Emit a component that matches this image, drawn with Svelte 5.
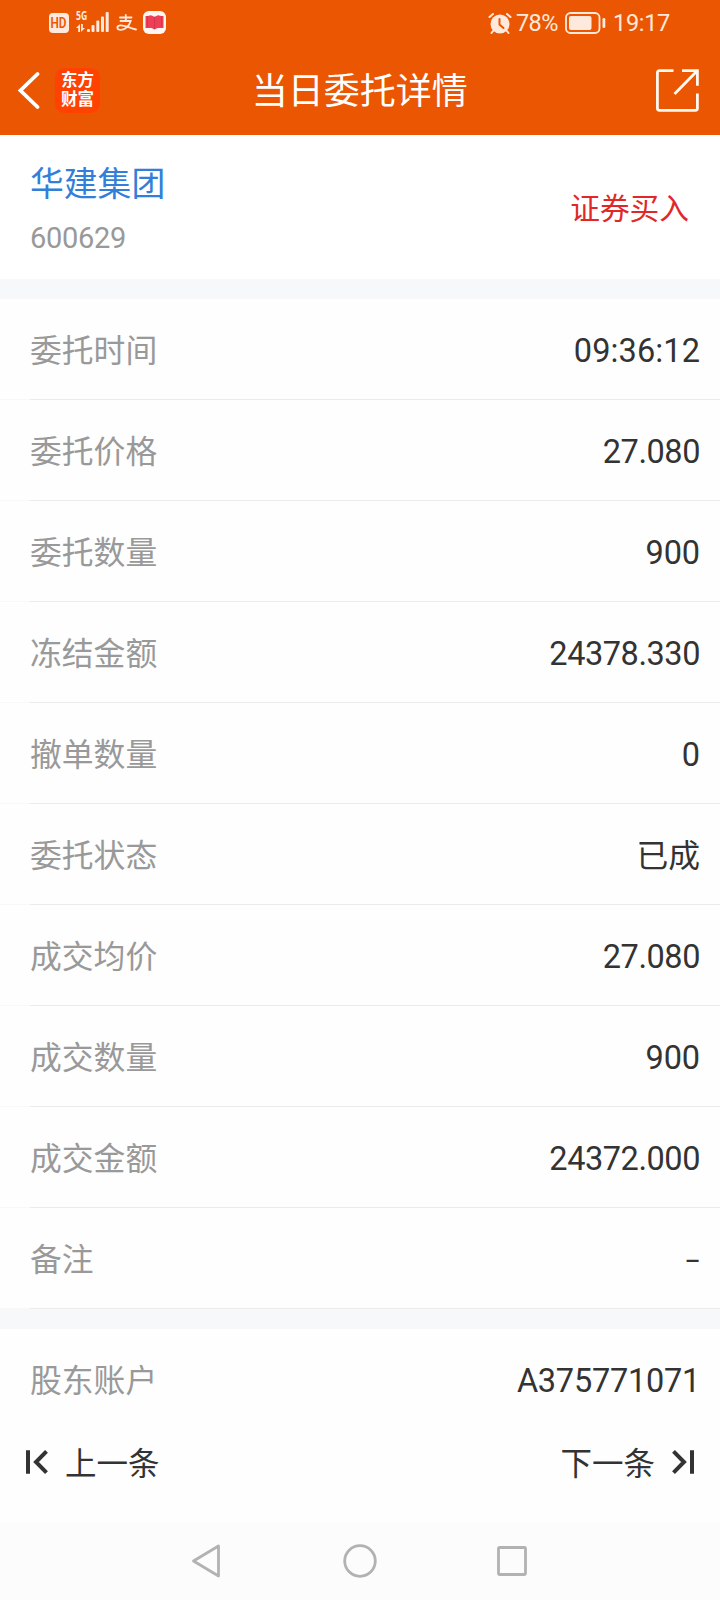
<script>
  const rows = [
    ['委托时间', '09:36:12'],
    ['委托价格', '27.080'],
    ['委托数量', '900'],
    ['冻结金额', '24378.330'],
    ['撤单数量', '0'],
    ['委托状态', '已成'],
    ['成交均价', '27.080'],
    ['成交数量', '900'],
    ['成交金额', '24372.000'],
    ['备注', '–']
  ];
</script>

<div class="screen">
  <header>
    <div class="status">
      <div class="group left">
        <span class="hd"><b>HD</b></span>
        <div class="net">
          <span class="gen">5G</span>
          <svg width="34" height="22" viewBox="0 0 34 22" fill="#ffe9dc">
            <path d="M4 13v8H2.200v-4H0zM5 21v-8h1.800v4H9z" />
            <rect x="11" y="18" width="3" height="3" rx="1" />
            <rect x="15.500" y="14" width="3" height="7" rx="1" />
            <rect x="20.300" y="9.500" width="3" height="11.500" rx="1" />
            <rect x="25" y="5.500" width="3" height="15.500" rx="1" />
            <rect x="29.700" y="1" width="3" height="20" rx="1" />
          </svg>
        </div>
        <svg class="pay" width="22" height="18" viewBox="0 0 22 18" fill="none" stroke="#ffe9dc" stroke-width="1.800" stroke-linecap="round">
          <path d="M4 3.500h11.500M9.800 1v5.500M4.500 7h10.200C13.500 11 10 15.500 5 15.800c-4.500.2-4.800-4-.8-4.500 4-.4 9 2.600 15.800 4.200" />
        </svg>
        <svg class="book" width="23" height="23" viewBox="0 0 23 23">
          <rect width="23" height="23" rx="6" fill="#fff6f2" />
          <path d="M2.500 5h2l3.500-.8 3.500 1.600L15 4.200l3.500.8h2v12h-6l-3 1.500-3-1.500h-6z" fill="#ed4057" />
          <path d="M4.500 5v11M18.500 5v11M11.500 6v12" stroke="#c92f47" stroke-width=".7" fill="none" />
        </svg>
      </div>
      <div class="group right">
        <svg width="24" height="23" viewBox="0 0 24 23">
          <path d="M1.500 5 5 2M22.500 5 19 2M5.500 18.500l-2 2.500M18.500 18.500l2 2.500" stroke="#ffe9dc" stroke-width="2" stroke-linecap="round" />
          <circle cx="12" cy="12" r="9.500" fill="#ffe9dc" />
          <path d="M11.500 7v5.500l4 3.500" fill="none" stroke="#eb5603" stroke-width="2" stroke-linecap="round" />
        </svg>
        <span class="pct">78%</span>
        <svg class="battery" width="41" height="22" viewBox="0 0 41 22" fill="#ffe9dc">
          <rect x="1" y="1" width="33.500" height="20" rx="4.500" fill="none" stroke="#ffe9dc" stroke-width="1.800" />
          <rect x="4" y="4" width="22.500" height="14" rx="2" />
          <rect x="37.500" y="6" width="2.800" height="10" rx="1.300" />
        </svg>
        <span class="clock">19:17</span>
      </div>
    </div>
    <div class="titlebar">
      <div class="side">
        <svg class="back" width="23" height="38" viewBox="0 0 23 38" fill="none" stroke="#fff" stroke-width="3.800" stroke-linecap="round">
          <path d="M20.500 3 3.500 19.500l17 16.500" />
        </svg>
        <div class="logo"><span>东方</span><span>财富</span></div>
      </div>
      <h1>当日委托详情</h1>
      <div class="side end">
        <svg width="43" height="43" viewBox="0 0 43 43" fill="none" stroke="#fff8ee" stroke-width="2.800" stroke-linejoin="round">
          <path d="M17.500 1.700H3.400a2 2 0 0 0-2 2v35.600a2 2 0 0 0 2 2h36a2 2 0 0 0 2-2V24.500" />
          <path d="M26 1.700h15.400v15M41 2 18.500 25" stroke-linejoin="miter" />
        </svg>
      </div>
    </div>
  </header>

  <section class="stock">
    <div>
      <div class="name">华建集团</div>
      <div class="code">600629</div>
    </div>
    <div class="side-type">证券买入</div>
  </section>

  <main>
    {#each rows as [label, value]}
      <div class="row">
        <span class="label">{label}</span>
        <span
          class="value"
          class:dash={value === '–'}
          class:decimal={value.includes('.')}
          class:cjk={value === '已成'}
          class:time={value.includes(':')}>{value}</span>
      </div>
    {/each}
  </main>

  <section class="account">
    <div class="row plain">
      <span class="label">股东账户</span>
      <span class="value acct">A375771071</span>
    </div>
    <div class="pager">
      <div class="step">
        <svg width="24" height="26" viewBox="0 0 24 26" fill="none" stroke="#333" stroke-width="4">
          <path d="M3 1.300v23.400M21.500 2.300 11 13l10.500 10.700" />
        </svg>
        <span>上一条</span>
      </div>
      <div class="step next">
        <span>下一条</span>
        <svg width="24" height="26" viewBox="0 0 24 26" fill="none" stroke="#333" stroke-width="4">
          <path d="M21 1.300v23.400M2.500 2.300 13 13 2.500 23.700" />
        </svg>
      </div>
    </div>
  </section>

  <nav>
    <svg width="30" height="36" viewBox="0 0 30 36"><path d="M27.500 3v30L2.500 18z" /></svg>
    <svg width="34" height="34" viewBox="0 0 34 34"><circle cx="17" cy="17" r="15.300" /></svg>
    <svg width="30" height="30" viewBox="0 0 30 30"><rect x="1.500" y="1.500" width="27" height="27" rx="1" /></svg>
  </nav>
</div>

<style>
  :global(body) { margin: 0; background: #fff; }
  .screen {
    width: 720px;
    height: 1600px;
    display: flex;
    flex-direction: column;
    overflow: hidden;
    background: #fefefe;
    font-family: Roboto, 'Noto Sans CJK SC', sans-serif;
    color: #333;
  }
  svg { display: block; flex: none; }
  header { height: 135px; background: #eb5603; color: #fff; flex: none; }
  .status {
    height: 46px;
    box-sizing: border-box;
    padding: 0 49px;
    display: flex;
    justify-content: space-between;
    color: #ffe9dc;
  }
  .group { display: flex; align-items: center; }
  .hd {
    width: 20px;
    height: 20px;
    border-radius: 4px;
    background: #ffe9dc;
    color: #eb5603;
    font-size: 14px;
    line-height: 20px;
    display: flex;
    justify-content: center;
  }
  .hd b { font-weight: 600; transform: scaleX(.84); }
  .net { position: relative; margin: -2px 0 0 7px; }
  .gen {
    position: absolute;
    left: 0;
    top: 0;
    font-family: 'Open Sans', sans-serif;
    font-size: 12px;
    font-weight: 700;
    line-height: 10px;
    transform: scaleX(.72);
    transform-origin: left;
  }
  .pay { margin-left: 6px; }
  .book { margin: -2px 0 0 5px; }
  .right { padding-right: 1px; }
  .pct { margin-left: 4px; width: 45px; font-size: 23.500px; letter-spacing: -.6px; }
  .battery { margin-left: 4px; }
  .clock { margin-left: 7px; width: 57px; font-size: 23.500px; text-align: right; letter-spacing: -.3px; }
  .titlebar {
    height: 89px;
    box-sizing: border-box;
    padding: 0 21.500px 0 17px;
    display: grid;
    grid-template-columns: 1fr auto 1fr;
    align-items: center;
  }
  .side { display: flex; align-items: center; gap: 15px; }
  .back { margin-top: -2px; }
  .end { justify-content: flex-end; }
  .end svg { margin-top: -1px; }
  .logo {
    width: 45px;
    height: 45px;
    margin-top: -1px;
    border-radius: 9px;
    background: #ff4200;
    display: flex;
    flex-direction: column;
    justify-content: center;
    align-items: center;
    font-size: 16.500px;
    font-weight: 700;
    line-height: 19px;
  }
  h1 { margin: 3px 0 0 4px; font-size: 36px; line-height: 52px; font-weight: 400; }
  .stock {
    height: 144px;
    flex: none;
    box-sizing: border-box;
    padding: 4px 31px 0 30px;
    display: flex;
    align-items: center;
    justify-content: space-between;
    background: #fff;
  }
  .name { color: #327fd9; font-size: 33.800px; line-height: 50px; }
  .code { color: #999; font-size: 29px; line-height: 40px; margin-top: 8px; letter-spacing: -.3px; }
  .side-type { color: #e02828; font-size: 29.700px; margin-top: -6px; }
  main { border-top: 20px solid #f6f8fa; border-bottom: 20px solid #f6f8fa; flex: none; }
  .row {
    height: 101px;
    box-sizing: border-box;
    padding: 2px 20px 0 30px;
    display: flex;
    align-items: center;
    justify-content: space-between;
    background: linear-gradient(#ebebeb, #ebebeb) 30px 100% / 690px 1px no-repeat, linear-gradient(#f8f8f8, #f8f8f8) 0 100% / 30px 1px no-repeat, #fefefe;
  }
  .label { color: #999; font-size: 31.800px; margin-top: -6px; }
  .value { font-size: 32.500px; letter-spacing: -.1px; }
  .decimal { letter-spacing: -.45px; }
  .time { letter-spacing: .1px; }
  .acct { letter-spacing: -.25px; }
  .cjk { font-size: 31.800px; margin-top: -6px; }
  .dash { font-size: 24px; font-weight: 500; margin-top: 3px; }
  .plain { background: none; }
  .pager { display: flex; justify-content: space-between; padding: 0 25px; margin-top: 6px; }
  .step { display: flex; align-items: center; gap: 16px; font-size: 31.500px; line-height: 50px; }
  .step span { padding-top: 4px; margin-bottom: -4px; }
  .step svg { margin-top: 2px; }
  .account { height: 193px; }
  nav {
    flex: 1;
    background: #fcfcfc;
    display: flex;
    justify-content: space-between;
    align-items: center;
    padding: 0 193px 0 191px;
  }
  nav svg { fill: none; stroke: #b2b2b2; stroke-width: 2.800; stroke-linejoin: round; }
  nav svg:nth-child(2) { margin-left: 2px; }
</style>
